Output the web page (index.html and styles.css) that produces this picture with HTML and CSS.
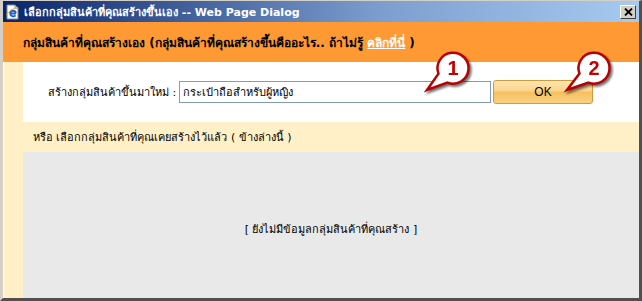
FILE: index.html
```html
<!DOCTYPE html>
<html lang="th">
  <head>
    <meta charset="UTF-8" />
    <title>เลือกกลุ่มสินค้าที่คุณสร้างขึ้นเอง -- Web Page Dialog</title>
    <link rel="stylesheet" href="styles.css">
  </head>
  <body>
    <div class="window">
      <div class="titlebar">
        <svg class="app-icon" width="16" height="16" viewBox="0 0 16 16">
          <path d="M2 1h8l3 3v11H2z" fill="#fff" stroke="#7a8aa0" />
          <path d="M10 1v3h3" fill="none" stroke="#7a8aa0" />
          <path d="M11 9.5H5.2a3 3 0 0 0 5.3 1.8" fill="none" stroke="#1c5fd0" stroke-width="1.8" />
          <path d="M5.2 9a3 3 0 0 1 5.8 0" fill="none" stroke="#1c5fd0" stroke-width="1.8" />
          <path d="M1.5 11c2-4 8-8 12-7" fill="none" stroke="#e8b020" stroke-width="1" />
        </svg>
        <span class="title">เลือกกลุ่มสินค้าที่คุณสร้างขึ้นเอง -- Web Page Dialog</span>
        <span class="close">
          <svg width="9" height="8" viewBox="0 0 9 8">
            <path d="M1 0.5l7 7M8 0.5l-7 7" stroke="#000" stroke-width="1.8" />
          </svg>
        </span>
      </div>

      <div class="header">
        <span>กลุ่มสินค้าที่คุณสร้างเอง (กลุ่มสินค้าที่คุณสร้างขึ้นคืออะไร.. ถ้าไม่รู้ <a href="#">คลิกที่นี่</a> )</span>
      </div>

      <div class="content">
        <div class="create-row">
          <label for="group-name">สร้างกลุ่มสินค้าขึ้นมาใหม่ :</label>
          <input id="group-name" type="text" value="กระเป๋าถือสำหรับผู้หญิง" />
          <button>OK</button>
        </div>
        <div class="choose">หรือ เลือกกลุ่มสินค้าที่คุณเคยสร้างไว้แล้ว ( ข้างล่างนี้ )</div>
        <div class="empty">[ ยังไม่มีข้อมูลกลุ่มสินค้าที่คุณสร้าง ]</div>
      </div>

      <svg class="callouts" width="200" height="52" viewBox="0 0 200 52">
        <path class="balloon" d="M20.5 28.6 L9 45 L29.4 37.6 A15.5 15.5 0 1 0 20.5 28.6 Z" />
        <text class="num" x="35" y="30">1</text>
        <path class="balloon" d="M161.5 28.6 L149 45 L170.4 37.6 A15.5 15.5 0 1 0 161.5 28.6 Z" />
        <text class="num" x="176" y="30">2</text>
      </svg>
    </div>
  </body>
</html>
```

FILE: styles.css
```css
body {
  margin: 0;
  font-family: Tahoma, "DejaVu Sans", "Noto Sans", sans-serif;
  font-size: 11px;
  color: #000;
}
.window {
  position: relative;
  width: 642px;
  height: 301px;
  box-sizing: border-box;
  display: flex;
  flex-direction: column;
  border-top: 1px solid #d4d0c8;
  border-left: 3px solid #d4d0c8;
  border-right: 3px solid #505050;
  border-bottom: 3px solid #505050;
  box-shadow: inset 1px 0 0 #fff;
  background: #fff0c8;
}
.titlebar {
  height: 21px;
  display: flex;
  align-items: center;
  padding: 0 3px 0 2px;
  background: linear-gradient(to right, #0a246a, #7d9fd0 60%, #a6caf0);
  color: #fff;
}
.app-icon {
  flex: none;
  margin-right: 3px;
}
.title {
  flex: 1;
  font-weight: bold;
  font-size: 11px;
}
.close {
  width: 14px;
  height: 12px;
  display: flex;
  align-items: center;
  justify-content: center;
  background: #d4d0c8;
  border: 1px solid;
  border-color: #fff #404040 #404040 #fff;
}
.header {
  height: 40px;
  display: flex;
  align-items: center;
  padding-left: 20px;
  background: #ff9933;
  font-weight: bold;
  font-size: 12px;
}
.header a {
  color: #fff;
  text-decoration: underline;
}
.content {
  flex: 1;
  display: flex;
  flex-direction: column;
  padding-left: 20px;
}
.create-row {
  height: 60px;
  display: flex;
  align-items: center;
  padding-left: 25px;
  background: #fff;
}
.create-row label {
  width: 131px;
}
.create-row input {
  width: 312px;
  height: 22px;
  box-sizing: border-box;
  margin: 0 2px 0 0;
  padding: 0 3px;
  border: 1px solid #7f9db9;
  font-family: inherit;
  font-size: 11px;
}
.create-row button {
  width: 100px;
  height: 24px;
  border: 1px solid #d09a40;
  border-radius: 3px;
  background: linear-gradient(#fde6b0, #fbd48a 45%, #f7c060 50%, #fad080);
  font-family: "Liberation Sans", Arial, sans-serif;
  font-size: 12px;
  font-weight: normal;
  color: #000;
}
.choose {
  height: 30px;
  display: flex;
  align-items: center;
  padding-left: 10px;
}
.empty {
  flex: 1;
  display: flex;
  align-items: center;
  justify-content: center;
  padding-top: 8px;
  background: #e9e9e9;
}
.callouts {
  position: absolute;
  left: 415px;
  top: 44px;
  overflow: visible;
  filter: drop-shadow(2px 2px 1px rgba(0, 0, 0, 0.55));
}
.balloon {
  fill: #fff;
  stroke: #b80000;
  stroke-width: 2.5;
}
.num {
  fill: #c20000;
  font-family: "Liberation Sans", Arial, sans-serif;
  font-weight: bold;
  font-size: 20px;
  text-anchor: middle;
}
```
